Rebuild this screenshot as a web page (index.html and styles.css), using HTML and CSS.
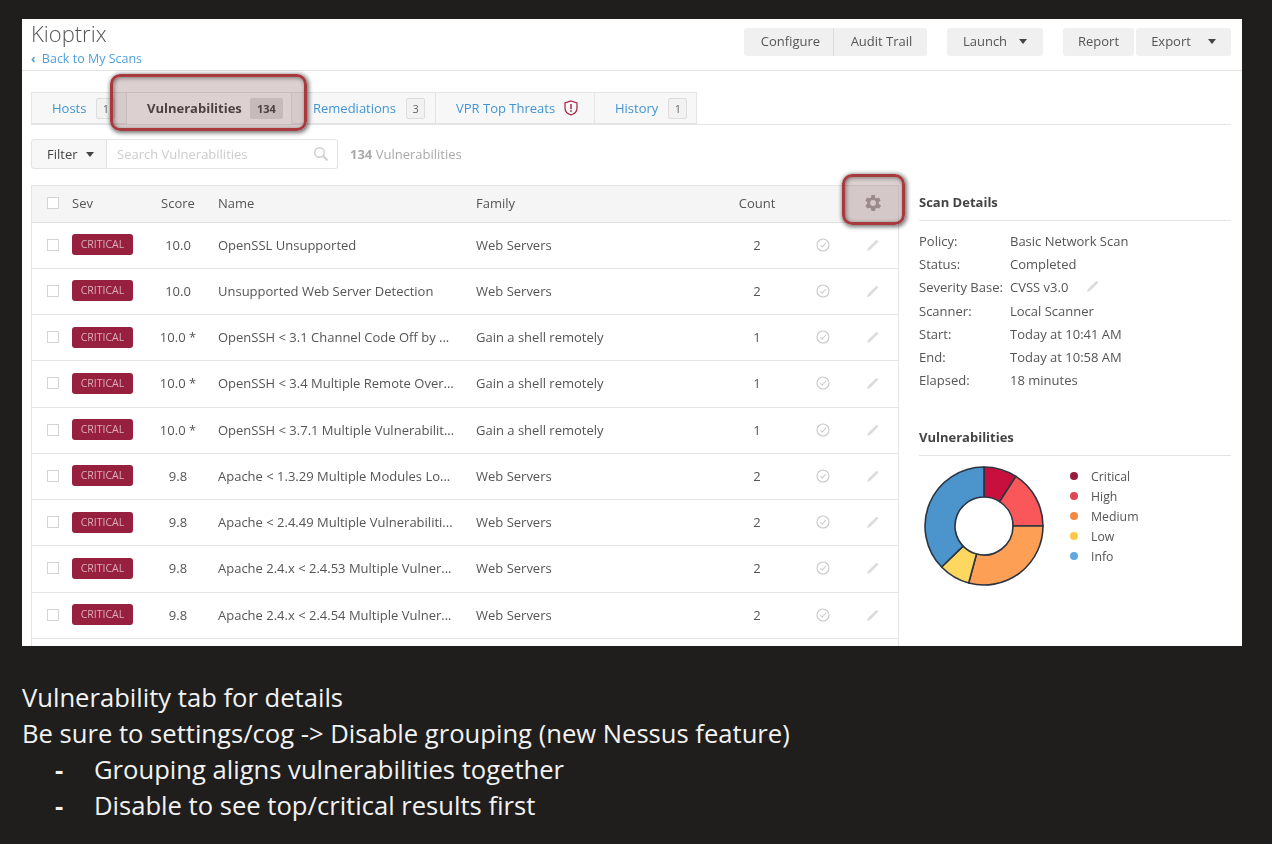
FILE: index.html
```html
<!DOCTYPE html>
<html>
<head>
    <meta charset="UTF-8">
    <meta name="viewport" content="width=device-width, initial-scale=1.0">
    <title>Kioptrix</title>
    <link rel="stylesheet" href="styles.css">
</head>
<body>
    <div class="shot">
        <div class="top">
            <div>
                <h1>Kioptrix</h1>
                <a class="back"><span class="back-arrow">‹</span> Back to My Scans</a>
            </div>
            <div class="actions">
                <div class="btn-group">
                    <span class="btn btn-first">Configure</span>
                    <span class="btn btn-last">Audit Trail</span>
                </div>
                <span class="btn btn-launch">Launch <i class="caret"></i></span>
                <div class="btn-group btn-group-tight">
                    <span class="btn btn-report">Report</span>
                    <span class="btn btn-export">Export <i class="caret"></i></span>
                </div>
            </div>
        </div>

        <div class="tabs">
            <div class="tab tab-hosts">Hosts <span class="badge">1</span></div>
            <div class="tab tab-active">Vulnerabilities <span class="badge">134</span></div>
            <div class="tab tab-rem">Remediations <span class="badge">3</span></div>
            <div class="tab tab-vpr">VPR Top Threats
                <svg class="shield" width="14" height="16" viewBox="0 0 14 16"><path d="M7 1 L13 3 V8 C13 11.5 10 14 7 15 C4 14 1 11.5 1 8 V3 Z" fill="none" stroke="#a3223f" stroke-width="1.2"/><rect x="6.3" y="4" width="1.4" height="5.2" fill="#a3223f"/><rect x="6.3" y="10.2" width="1.4" height="1.7" fill="#a3223f"/></svg>
            </div>
            <div class="tab tab-history">History <span class="badge">1</span></div>
        </div>

        <div class="filter-row">
            <span class="filter-btn">Filter <i class="caret"></i></span>
            <div class="search">
                <span>Search Vulnerabilities</span>
                <svg width="16" height="16" viewBox="0 0 16 16"><circle cx="6.5" cy="6.5" r="4.8" fill="none" stroke="#cfcfcf" stroke-width="1.5"/><path d="M10 10 L14.5 14.5" stroke="#cfcfcf" stroke-width="2"/></svg>
            </div>
            <span class="filter-count"><b>134</b> Vulnerabilities</span>
        </div>

        <div class="content">
            <div class="table">
                <div class="row row-head">
                    <span class="check"></span>
                    <span class="c-sev">Sev</span>
                    <span class="c-score">Score</span>
                    <span class="c-name">Name</span>
                    <span class="c-family">Family</span>
                    <span class="c-count">Count</span>
                    <span class="c-ok"></span>
                    <span class="c-edit">
                        <svg width="22" height="22" viewBox="1.15 0 24 24"><path fill="#a9a3a3" d="M19.4 13a7.6 7.6 0 0 0 0-2l2.1-1.6-2-3.5-2.5 1a7.500 7.500 0 0 0-1.700-1L15.400 3.200h-4l-.4 2.700a7.500 7.500 0 0 0-1.700 1l-2.500-1-2 3.500L6.900 11a7.600 7.600 0 0 0 0 2l-2.100 1.600 2 3.500 2.500-1a7.500 7.500 0 0 0 1.700 1l.4 2.700h4l.4-2.700a7.500 7.500 0 0 0 1.700-1l2.500 1 2-3.500zM13.200 15.200a3.200 3.200 0 1 1 0-6.400 3.200 3.200 0 0 1 0 6.400z"/></svg>
                    </span>
                </div>
                <div class="row">
                    <span class="check"></span><span class="c-sev"><em class="sev">CRITICAL</em></span>
                    <span class="c-score">10.0</span><span class="c-name">OpenSSL Unsupported</span>
                    <span class="c-family">Web Servers</span><span class="c-count">2</span>
                    <span class="c-ok"><svg class="ok-icon" viewBox="0 0 14 14"><use href="#ok"/></svg></span>
                    <span class="c-edit"><svg class="pen-icon" viewBox="0 0 14 14"><use href="#pen"/></svg></span>
                </div>
                <div class="row">
                    <span class="check"></span><span class="c-sev"><em class="sev">CRITICAL</em></span>
                    <span class="c-score">10.0</span><span class="c-name">Unsupported Web Server Detection</span>
                    <span class="c-family">Web Servers</span><span class="c-count">2</span>
                    <span class="c-ok"><svg class="ok-icon" viewBox="0 0 14 14"><use href="#ok"/></svg></span>
                    <span class="c-edit"><svg class="pen-icon" viewBox="0 0 14 14"><use href="#pen"/></svg></span>
                </div>
                <div class="row">
                    <span class="check"></span><span class="c-sev"><em class="sev">CRITICAL</em></span>
                    <span class="c-score">10.0 *</span><span class="c-name">OpenSSH &lt; 3.1 Channel Code Off by ...</span>
                    <span class="c-family">Gain a shell remotely</span><span class="c-count">1</span>
                    <span class="c-ok"><svg class="ok-icon" viewBox="0 0 14 14"><use href="#ok"/></svg></span>
                    <span class="c-edit"><svg class="pen-icon" viewBox="0 0 14 14"><use href="#pen"/></svg></span>
                </div>
                <div class="row">
                    <span class="check"></span><span class="c-sev"><em class="sev">CRITICAL</em></span>
                    <span class="c-score">10.0 *</span><span class="c-name">OpenSSH &lt; 3.4 Multiple Remote Over...</span>
                    <span class="c-family">Gain a shell remotely</span><span class="c-count">1</span>
                    <span class="c-ok"><svg class="ok-icon" viewBox="0 0 14 14"><use href="#ok"/></svg></span>
                    <span class="c-edit"><svg class="pen-icon" viewBox="0 0 14 14"><use href="#pen"/></svg></span>
                </div>
                <div class="row">
                    <span class="check"></span><span class="c-sev"><em class="sev">CRITICAL</em></span>
                    <span class="c-score">10.0 *</span><span class="c-name">OpenSSH &lt; 3.7.1 Multiple Vulnerabilit...</span>
                    <span class="c-family">Gain a shell remotely</span><span class="c-count">1</span>
                    <span class="c-ok"><svg class="ok-icon" viewBox="0 0 14 14"><use href="#ok"/></svg></span>
                    <span class="c-edit"><svg class="pen-icon" viewBox="0 0 14 14"><use href="#pen"/></svg></span>
                </div>
                <div class="row">
                    <span class="check"></span><span class="c-sev"><em class="sev">CRITICAL</em></span>
                    <span class="c-score">9.8</span><span class="c-name">Apache &lt; 1.3.29 Multiple Modules Lo...</span>
                    <span class="c-family">Web Servers</span><span class="c-count">2</span>
                    <span class="c-ok"><svg class="ok-icon" viewBox="0 0 14 14"><use href="#ok"/></svg></span>
                    <span class="c-edit"><svg class="pen-icon" viewBox="0 0 14 14"><use href="#pen"/></svg></span>
                </div>
                <div class="row">
                    <span class="check"></span><span class="c-sev"><em class="sev">CRITICAL</em></span>
                    <span class="c-score">9.8</span><span class="c-name">Apache &lt; 2.4.49 Multiple Vulnerabiliti...</span>
                    <span class="c-family">Web Servers</span><span class="c-count">2</span>
                    <span class="c-ok"><svg class="ok-icon" viewBox="0 0 14 14"><use href="#ok"/></svg></span>
                    <span class="c-edit"><svg class="pen-icon" viewBox="0 0 14 14"><use href="#pen"/></svg></span>
                </div>
                <div class="row">
                    <span class="check"></span><span class="c-sev"><em class="sev">CRITICAL</em></span>
                    <span class="c-score">9.8</span><span class="c-name">Apache 2.4.x &lt; 2.4.53 Multiple Vulner...</span>
                    <span class="c-family">Web Servers</span><span class="c-count">2</span>
                    <span class="c-ok"><svg class="ok-icon" viewBox="0 0 14 14"><use href="#ok"/></svg></span>
                    <span class="c-edit"><svg class="pen-icon" viewBox="0 0 14 14"><use href="#pen"/></svg></span>
                </div>
                <div class="row">
                    <span class="check"></span><span class="c-sev"><em class="sev">CRITICAL</em></span>
                    <span class="c-score">9.8</span><span class="c-name">Apache 2.4.x &lt; 2.4.54 Multiple Vulner...</span>
                    <span class="c-family">Web Servers</span><span class="c-count">2</span>
                    <span class="c-ok"><svg class="ok-icon" viewBox="0 0 14 14"><use href="#ok"/></svg></span>
                    <span class="c-edit"><svg class="pen-icon" viewBox="0 0 14 14"><use href="#pen"/></svg></span>
                </div>
                <div class="row"></div>
            </div>

            <div class="side">
                <h3>Scan Details</h3>
                <dl class="details">
                    <dt>Policy:</dt><dd>Basic Network Scan</dd>
                    <dt>Status:</dt><dd>Completed</dd>
                    <dt>Severity Base:</dt><dd>CVSS v3.0 <svg class="pen-icon pen-inline" viewBox="0 0 14 14"><use href="#pen"/></svg></dd>
                    <dt>Scanner:</dt><dd>Local Scanner</dd>
                    <dt>Start:</dt><dd>Today at 10:41 AM</dd>
                    <dt>End:</dt><dd>Today at 10:58 AM</dd>
                    <dt>Elapsed:</dt><dd>18 minutes</dd>
                </dl>
                <h3 class="vuln-title">Vulnerabilities</h3>
                <div class="chart">
                    <svg width="122" height="122" viewBox="-61 -61 122 122">
                        <g stroke="#2b3440" stroke-width="1.6" stroke-linejoin="round">
                            <path fill="#c8103f" d="M0 -59 A59 59 0 0 1 31.900 -49.600 L15.700 -24.400 A29 29 0 0 0 0 -29 Z"/>
                            <path fill="#f9575a" d="M31.900 -49.600 A59 59 0 0 1 59 0 L29 0 A29 29 0 0 0 15.700 -24.400 Z"/>
                            <path fill="#fd9f55" d="M59 0 A59 59 0 0 1 -15.300 57 L-7.500 28 A29 29 0 0 0 29 0 Z"/>
                            <path fill="#fdd75f" d="M-15.300 57 A59 59 0 0 1 -42.400 41 L-20.900 20.100 A29 29 0 0 0 -7.500 28 Z"/>
                            <path fill="#4b95cc" d="M-42.400 41 A59 59 0 0 1 0 -59 L0 -29 A29 29 0 0 0 -20.900 20.100 Z"/>
                        </g>
                    </svg>
                    <ul class="legend">
                        <li><i class="dot dot-critical"></i>Critical</li>
                        <li><i class="dot dot-high"></i>High</li>
                        <li><i class="dot dot-medium"></i>Medium</li>
                        <li><i class="dot dot-low"></i>Low</li>
                        <li><i class="dot dot-info"></i>Info</li>
                    </ul>
                </div>
            </div>
        </div>

        <div class="mark mark-tab"></div>
        <div class="mark mark-gear"></div>
    </div>

    <div class="notes">
        <p>Vulnerability tab for details</p>
        <p>Be sure to settings/cog -&gt; Disable grouping (new Nessus feature)</p>
        <ul>
            <li>Grouping aligns vulnerabilities together</li>
            <li>Disable to see top/critical results first</li>
        </ul>
    </div>

    <svg width="0" height="0" class="defs">
        <symbol id="ok" viewBox="0 0 14 14">
            <circle cx="7" cy="7" r="6" fill="none" stroke="#c9c9c9" stroke-width="1.100"/>
            <path d="M4.300 7.300 L6.300 9 L9.800 5" fill="none" stroke="#c9c9c9" stroke-width="1.100"/>
        </symbol>
        <symbol id="pen" viewBox="0 0 14 14">
            <path d="M1 13 L2 10 L10.500 1.700 L12.500 3.500 L4 12 Z" fill="#dcdcdc"/>
        </symbol>
    </svg>
</body>
</html>
```

FILE: styles.css
```css
body {
    margin: 0;
    width: 1272px;
    height: 844px;
    overflow: hidden;
    background: #1f1e1c;
    font-family: 'Open Sans', sans-serif;
    color: #555;
}
.shot {
    position: relative;
    width: 1220px;
    height: 627px;
    margin: 19px 0 0 22px;
    background: white;
    overflow: hidden;
    font-size: 13px;
    filter: blur(0.3px);
}
.defs { position: absolute; }

/* header */
.top {
    display: flex;
    justify-content: space-between;
    height: 51px;
    padding: 0 11px 0 9px;
    border-bottom: 1px solid #e4e4e4;
}
h1 {
    margin: 0;
    font-size: 22px;
    font-weight: 300;
    line-height: 28px;
    color: #555;
}
.back {
    display: block;
    margin-top: 3px;
    line-height: 18px;
    font-size: 12.500px;
    color: #4f9fdc;
}
.back-arrow { font-weight: 700; margin-right: 3px; }
.actions {
    display: flex;
    gap: 20px;
    padding-top: 8.500px;
}
.btn-group { display: flex; }
.btn-group-tight { gap: 2px; }
.btn {
    display: flex;
    align-items: center;
    justify-content: center;
    box-sizing: border-box;
    height: 28px;
    padding-bottom: 1px;
    background: #f0f0f0;
    border-radius: 3px;
}
.btn-first { width: 90px; padding-left: 4px; border-right: 1px solid #ddd; border-radius: 3px 0 0 3px; }
.btn-last { width: 93px; padding-left: 2px; border-radius: 0 3px 3px 0; }
.btn-launch { width: 96px; gap: 12px; }
.btn-report { width: 71px; }
.btn-export { width: 95px; gap: 17px; }
.caret {
    display: inline-block;
    border-left: 4.500px solid transparent;
    border-right: 4.500px solid transparent;
    border-top: 5px solid #444;
}

/* tabs */
.tabs {
    display: flex;
    height: 32px;
    margin: 21px 11px 0 9px;
    border-bottom: 1px solid #e4e4e4;
}
.tab {
    display: flex;
    align-items: center;
    gap: 10px;
    box-sizing: border-box;
    height: 32px;
    padding-left: 21px;
    background: #f7f7f7;
    border: 1px solid #e4e4e4;
    border-left: none;
    color: #4295d4;
}
.tab-hosts { width: 96px; border-left: 1px solid #e4e4e4; padding-left: 20px; }
.tab-active {
    width: 165px;
    gap: 8px;
    background: white;
    border-bottom-color: white;
    padding-left: 20px;
    font-weight: 700;
    color: #444;
}
.tab-rem { width: 144px; padding-left: 21px; }
.tab-vpr { width: 159px; gap: 9px; padding-left: 20px; }
.tab-history { width: 102px; padding-left: 20px; }
.badge {
    display: inline-block;
    min-width: 15px;
    height: 19px;
    padding: 0 1px;
    line-height: 19px;
    text-align: center;
    font-size: 11px;
    font-weight: 400;
    color: #666;
    background: #f2f2f2;
    border: 1px solid #ddd;
    border-radius: 2px;
}
.tab-active .badge {
    width: 29px;
    background: #e2e2e2;
    border-color: #e2e2e2;
    font-weight: 700;
    color: #444;
}

/* filter */
.filter-row {
    display: flex;
    align-items: center;
    height: 30px;
    margin: 14px 0 0 9px;
}
.filter-btn {
    display: flex;
    align-items: center;
    gap: 8px;
    box-sizing: border-box;
    width: 76px;
    height: 30px;
    padding-left: 15px;
    background: #f7f7f7;
    border: 1px solid #e4e4e4;
    border-radius: 3px 0 0 3px;
    color: #444;
}
.search {
    display: flex;
    align-items: center;
    justify-content: space-between;
    box-sizing: border-box;
    width: 231px;
    height: 30px;
    padding: 0 8px 0 10px;
    border: 1px solid #e4e4e4;
    border-left: none;
    border-radius: 0 3px 3px 0;
    color: #ccc;
}
.filter-count { margin-left: 12px; color: #aaa; }

/* table */
.content {
    display: flex;
    gap: 20px;
    margin: 16px 11px 0 9px;
}
.table {
    flex: none;
    width: 868px;
    box-sizing: border-box;
    border: 1px solid #e4e4e4;
    border-bottom: none;
}
.row {
    display: grid;
    grid-template-columns: 15px 40px 116px 258px 250px 64px 50px 1fr;
    align-items: center;
    box-sizing: border-box;
    height: 46.250px;
    padding: 0 0 1px 15px;
    border-bottom: 1px solid #e4e4e4;
}
.row-head {
    height: 36.500px;
    background: #f5f5f5;
    border-bottom: 1px solid #e0e0e0;
}
.check {
    width: 10px;
    height: 10px;
    background: white;
    border: 1px solid #d4d4d4;
}
.c-sev { padding-left: 10px; }
.c-score { justify-self: center; margin-left: 36px; white-space: nowrap; }
.c-name, .c-family { white-space: nowrap; }
.c-count { justify-self: center; margin-left: -2px; }
.c-ok { justify-self: center; margin-left: 16px; }
.c-edit { justify-self: center; margin-left: 8px; line-height: 0; }
.sev {
    display: block;
    width: 61px;
    height: 21px;
    line-height: 21px;
    text-align: center;
    font-style: normal;
    font-size: 10.500px;
    color: #dcaebc;
    background: #97203e;
    border-radius: 3px;
}
.ok-icon { display: block; width: 14px; height: 14px; }
.pen-icon { display: block; width: 14px; height: 14px; }
.pen-inline { display: inline-block; margin-left: 14px; vertical-align: -1px; }

/* side panel */
.side { flex: 1; }
h3 {
    margin: 0;
    height: 36px;
    box-sizing: border-box;
    padding-top: 8px;
    font-size: 13px;
    font-weight: 700;
    color: #444;
    border-bottom: 1px solid #e4e4e4;
}
.details {
    display: grid;
    grid-template-columns: 91px 1fr;
    grid-auto-rows: 23.300px;
    align-items: center;
    margin: 8px 0 0;
}
dd { margin: 0; }
.vuln-title { margin-top: 28px; }
.chart {
    display: flex;
    gap: 25px;
    margin: 9px 0 0 5px;
}
.chart svg { margin-left: -1px; }
.legend {
    list-style: none;
    margin: 0;
    padding: 1px 0 0 0;
    font-size: 12.300px;
}
.legend li {
    display: flex;
    align-items: center;
    gap: 13px;
    height: 20px;
}
.dot {
    width: 8px;
    height: 8px;
    border-radius: 50%;
}
.dot-critical { background: #971c3d; }
.dot-high { background: #e2454f; }
.dot-medium { background: #f28a40; }
.dot-low { background: #fcc744; }
.dot-info { background: #61a8e0; }

/* red call-outs pasted on the shot */
.mark {
    position: absolute;
    box-sizing: border-box;
    background: rgba(110, 60, 60, 0.24);
    border: 3px solid #a83a3e;
    border-radius: 10px;
    box-shadow: 1px 1px 4px 1px rgba(0, 0, 0, 0.55), inset 1px 1px 4px rgba(0, 0, 0, 0.45);
}
.mark-tab { left: 88px; top: 55px; width: 197px; height: 57px; }
.mark-gear { left: 820px; top: 155px; width: 63px; height: 51px; }

/* slide text */
.notes {
    margin: 34px 0 0 22px;
    font-size: 25.600px;
    line-height: 36px;
    color: #f2f2f2;
}
.notes p { margin: 0; }
.notes ul {
    list-style: none;
    margin: 0;
    padding: 0 0 0 72px;
}
.notes li { position: relative; }
.notes li::before {
    content: "-";
    position: absolute;
    left: -39px;
    font-weight: 700;
}
```
